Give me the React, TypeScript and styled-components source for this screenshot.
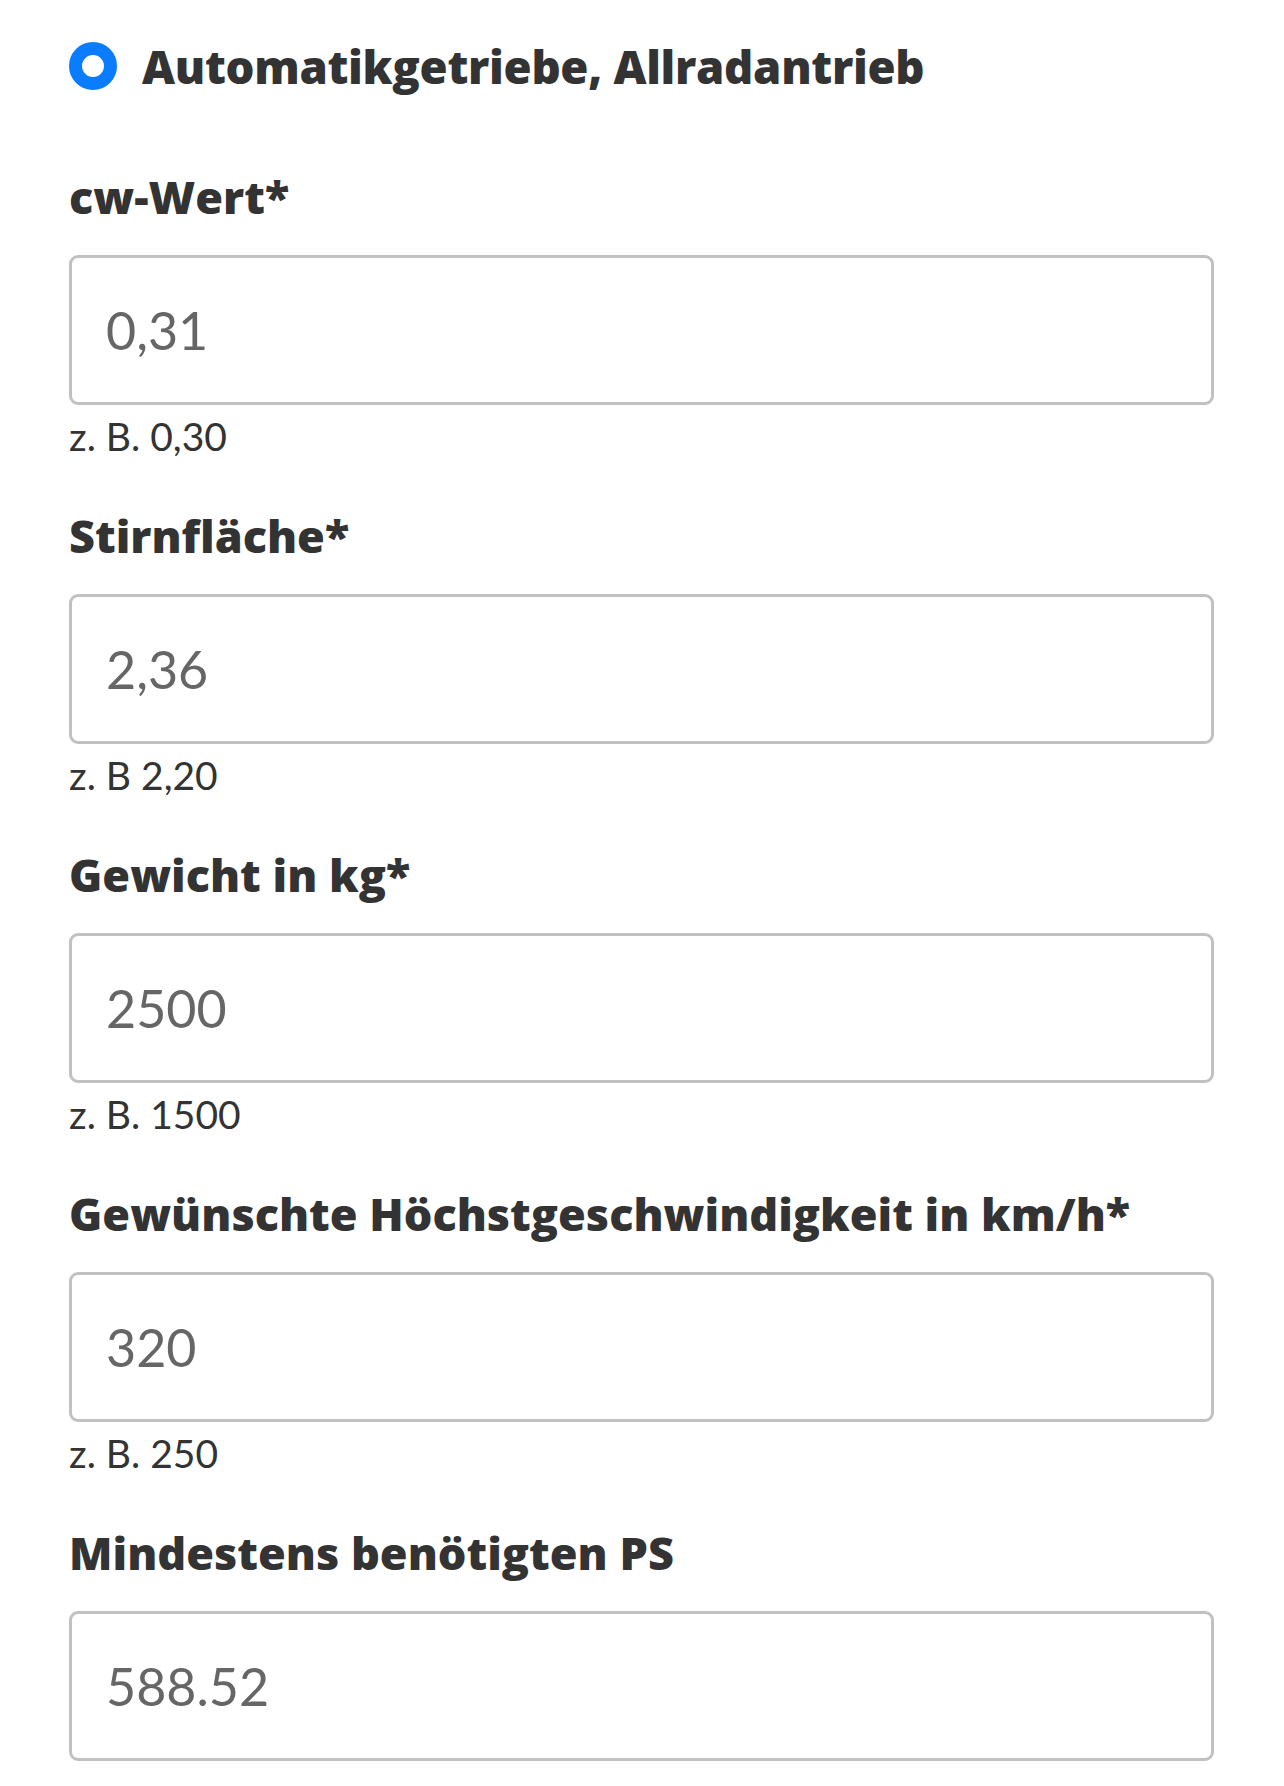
import React from 'react'
import styled, { createGlobalStyle } from 'styled-components'

const fields = [
  { label: 'cw-Wert*', value: '0,31', hint: 'z. B. 0,30' },
  { label: 'Stirnfläche*', value: '2,36', hint: 'z. B 2,20' },
  { label: 'Gewicht in kg*', value: '2500', hint: 'z. B. 1500' },
  {
    label: 'Gewünschte Höchstgeschwindigkeit in km/h*',
    value: '320',
    hint: 'z. B. 250',
  },
  { label: 'Mindestens benötigten PS', value: '588.52' },
]

const App: React.FC = () => {
  return (
    <>
      <GlobalStyle />
      <Page>
        <RadioRow>
          <RadioDot />
          <RadioLabel>Automatikgetriebe, Allradantrieb</RadioLabel>
        </RadioRow>
        {fields.map((field) => (
          <Field key={field.label}>
            <Label>{field.label}</Label>
            <ValueInput readOnly value={field.value} />
            {field.hint && <Hint>{field.hint}</Hint>}
          </Field>
        ))}
      </Page>
    </>
  )
}

const GlobalStyle = createGlobalStyle`
  html, body {
    margin: 0;
    padding: 0;
    background: #fff;
  }
`

const Page = styled.div`
  padding: 39px 70px 0 69px;
  color: #333;
`

const RadioRow = styled.div`
  display: flex;
  align-items: center;
  gap: 25px;
`

const RadioDot = styled.span`
  flex: none;
  width: 48px;
  height: 48px;
  box-sizing: border-box;
  border-radius: 50%;
  border: 13.5px solid #0a7cff;
  background: #fff;
`

const RadioLabel = styled.div`
  font-family: 'Open Sans', 'Liberation Sans', sans-serif;
  font-weight: 800;
  font-size: 45.5px;
  line-height: 54px;
  letter-spacing: -0.3px;
`

const Field = styled.div`
  display: flex;
  flex-direction: column;
  margin-top: 77px;
  & + & {
    margin-top: 49px;
  }
`

const Label = styled.label`
  font-family: 'Open Sans', 'Liberation Sans', sans-serif;
  font-weight: 800;
  font-size: 45px;
  line-height: 54px;
  margin-bottom: 31px;
`

const ValueInput = styled.input`
  box-sizing: border-box;
  width: 100%;
  height: 150px;
  margin: 0;
  padding: 0 34px;
  border: 3px solid #c1c1c1;
  border-radius: 9px;
  background: #fff;
  font-family: Lato, 'Open Sans', sans-serif;
  font-size: 52px;
  color: #666;
  outline: none;
`

const Hint = styled.div`
  margin-top: 8px;
  font-family: Lato, 'Open Sans', sans-serif;
  font-size: 39px;
  line-height: 47px;
  color: #333;
`

export default App
